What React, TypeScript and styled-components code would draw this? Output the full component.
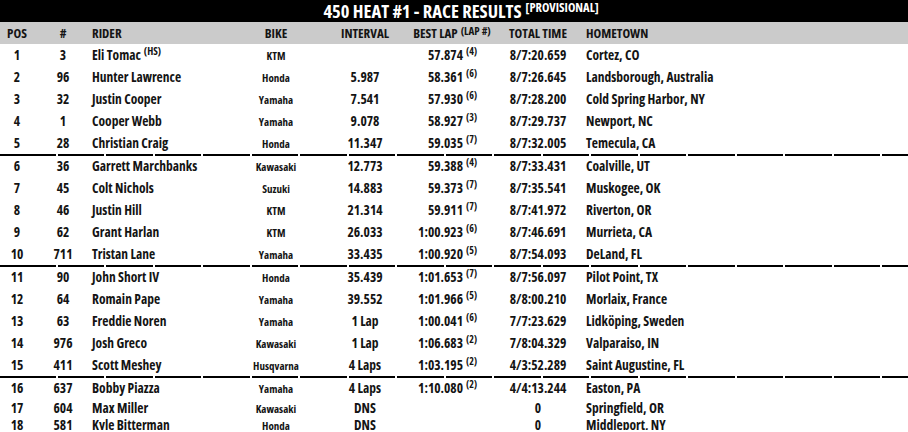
import React from "react";
import styled, { createGlobalStyle } from "styled-components";

const GlobalStyle = createGlobalStyle`
  body {
    margin: 0;
    background: #fff;
    font-family: "Open Sans", "DejaVu Sans Condensed", sans-serif;
    font-stretch: 75%;
    font-weight: 700;
    color: #141414;
  }
`;

const Page = styled.div`
  width: 908px;
  overflow: hidden;
`;

const TitleBar = styled.div`
  height: 22px;
  background: #000;
  color: #fff;
  display: flex;
  justify-content: center;
  align-items: baseline;
  padding-left: 14px;
  font-size: 18.5px;
  line-height: 22px;
`;

const Sup = styled.span<{ $size?: number; $lift?: number }>`
  font-size: ${(p) => p.$size || 10}px;
  position: relative;
  top: -${(p) => p.$lift || 5}px;
  line-height: 1;
  margin-left: 3px;
`;

const TitleSup = styled.span`
  font-size: 12.5px;
  line-height: 1;
  position: relative;
  top: -6px;
  margin-left: 4px;
`;

const columns = "34px 58px 144px 80px 98px 76px 96px 1fr";

const HeaderRow = styled.div`
  display: grid;
  grid-template-columns: ${columns};
  height: 22px;
  align-items: baseline;
  background: #cbcbcb;
  font-size: 13px;
`;

const Row = styled.div<{ $h?: number }>`
  display: grid;
  grid-template-columns: ${columns};
  height: ${(p) => p.$h || 22}px;
  align-items: baseline;
  font-size: 13.5px;
`;

const Cell = styled.div<{ $align?: "left" | "center" | "right"; $small?: boolean; $padR?: number }>`
  white-space: nowrap;
  display: flex;
  align-items: baseline;
  justify-content: ${(p) =>
    p.$align === "left" ? "flex-start" : p.$align === "right" ? "flex-end" : "center"};
  padding-right: ${(p) => p.$padR || 0}px;
  font-size: ${(p) => (p.$small ? "11px" : "inherit")};
  line-height: 22px;
`;

const Separator = styled.div`
  height: 2px;
  margin: 0 0 -1px;
  background: repeating-linear-gradient(to right, #000 0 46.5px, transparent 46.5px 48.5px);
  background-position: 9px 0;
`;

type Result = {
  pos: number;
  num: number;
  rider: string;
  tag?: string;
  bike: string;
  interval: string;
  best?: string;
  lap?: number;
  total: string;
  town: string;
  h?: number;
};

const groups: Result[][] = [
  [
    { pos: 1, num: 3, rider: "Eli Tomac", tag: "(HS)", bike: "KTM", interval: "", best: "57.874", lap: 4, total: "8/7:20.659", town: "Cortez, CO" },
    { pos: 2, num: 96, rider: "Hunter Lawrence", bike: "Honda", interval: "5.987", best: "58.361", lap: 6, total: "8/7:26.645", town: "Landsborough, Australia" },
    { pos: 3, num: 32, rider: "Justin Cooper", bike: "Yamaha", interval: "7.541", best: "57.930", lap: 6, total: "8/7:28.200", town: "Cold Spring Harbor, NY" },
    { pos: 4, num: 1, rider: "Cooper Webb", bike: "Yamaha", interval: "9.078", best: "58.927", lap: 3, total: "8/7:29.737", town: "Newport, NC" },
    { pos: 5, num: 28, rider: "Christian Craig", bike: "Honda", interval: "11.347", best: "59.035", lap: 7, total: "8/7:32.005", town: "Temecula, CA" },
  ],
  [
    { pos: 6, num: 36, rider: "Garrett Marchbanks", bike: "Kawasaki", interval: "12.773", best: "59.388", lap: 4, total: "8/7:33.431", town: "Coalville, UT" },
    { pos: 7, num: 45, rider: "Colt Nichols", bike: "Suzuki", interval: "14.883", best: "59.373", lap: 7, total: "8/7:35.541", town: "Muskogee, OK" },
    { pos: 8, num: 46, rider: "Justin Hill", bike: "KTM", interval: "21.314", best: "59.911", lap: 7, total: "8/7:41.972", town: "Riverton, OR" },
    { pos: 9, num: 62, rider: "Grant Harlan", bike: "KTM", interval: "26.033", best: "1:00.923", lap: 6, total: "8/7:46.691", town: "Murrieta, CA" },
    { pos: 10, num: 711, rider: "Tristan Lane", bike: "Yamaha", interval: "33.435", best: "1:00.920", lap: 5, total: "8/7:54.093", town: "DeLand, FL" },
  ],
  [
    { pos: 11, num: 90, rider: "John Short IV", bike: "Honda", interval: "35.439", best: "1:01.653", lap: 7, total: "8/7:56.097", town: "Pilot Point, TX" },
    { pos: 12, num: 64, rider: "Romain Pape", bike: "Yamaha", interval: "39.552", best: "1:01.966", lap: 5, total: "8/8:00.210", town: "Morlaix, France" },
    { pos: 13, num: 63, rider: "Freddie Noren", bike: "Yamaha", interval: "1 Lap", best: "1:00.041", lap: 6, total: "7/7:23.629", town: "Lidköping, Sweden" },
    { pos: 14, num: 976, rider: "Josh Greco", bike: "Kawasaki", interval: "1 Lap", best: "1:06.683", lap: 2, total: "7/8:04.329", town: "Valparaiso, IN" },
    { pos: 15, num: 411, rider: "Scott Meshey", bike: "Husqvarna", interval: "4 Laps", best: "1:03.195", lap: 2, total: "4/3:52.289", town: "Saint Augustine, FL" },
  ],
  [
    { pos: 16, num: 637, rider: "Bobby Piazza", bike: "Yamaha", interval: "4 Laps", best: "1:10.080", lap: 2, total: "4/4:13.244", town: "Easton, PA", h: 20 },
    { pos: 17, num: 604, rider: "Max Miller", bike: "Kawasaki", interval: "DNS", total: "0", town: "Springfield, OR", h: 17 },
    { pos: 18, num: 581, rider: "Kyle Bitterman", bike: "Honda", interval: "DNS", total: "0", town: "Middleport, NY", h: 16 },
  ],
];

const ResultRow = ({ r }: { r: Result }) => (
  <Row $h={r.h}>
    <Cell>{r.pos}</Cell>
    <Cell>{r.num}</Cell>
    <Cell $align="left">
      {r.rider}
      {r.tag && <Sup $size={10.5}>{r.tag}</Sup>}
    </Cell>
    <Cell $small>{r.bike}</Cell>
    <Cell>{r.interval}</Cell>
    <Cell $align="right" $padR={13}>
      {r.best}
      {r.lap && <Sup>({r.lap})</Sup>}
    </Cell>
    <Cell>{r.total}</Cell>
    <Cell $align="left">{r.town}</Cell>
  </Row>
);

export default function App() {
  return (
    <Page>
      <GlobalStyle />
      <TitleBar>
        450 HEAT #1 - RACE RESULTS<TitleSup>[PROVISIONAL]</TitleSup>
      </TitleBar>
      <HeaderRow>
        <Cell>POS</Cell>
        <Cell>#</Cell>
        <Cell $align="left">RIDER</Cell>
        <Cell>BIKE</Cell>
        <Cell>INTERVAL</Cell>
        <Cell>
          BEST LAP<Sup $size={11} $lift={3}>(LAP #)</Sup>
        </Cell>
        <Cell>TOTAL TIME</Cell>
        <Cell $align="left">HOMETOWN</Cell>
      </HeaderRow>
      {groups.map((g, gi) => (
        <React.Fragment key={gi}>
          {gi > 0 && <Separator />}
          {g.map((r) => (
            <ResultRow key={r.pos} r={r} />
          ))}
        </React.Fragment>
      ))}
    </Page>
  );
}
